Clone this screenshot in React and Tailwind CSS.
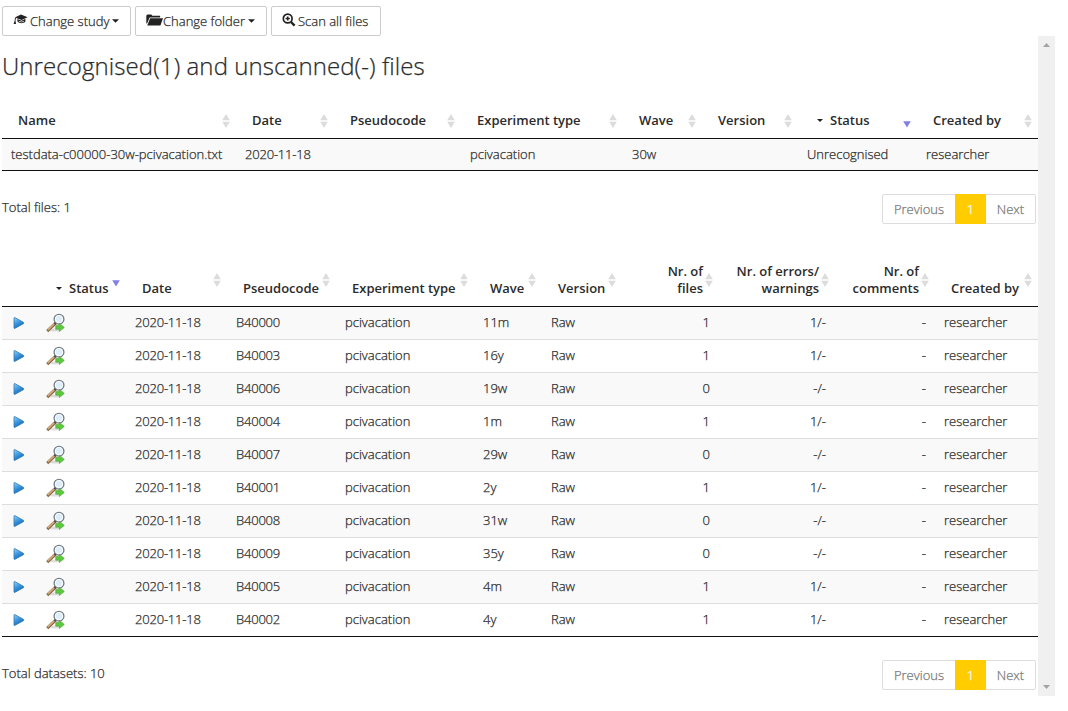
import React from "react";

const filesCols = ["w-[234px]", "w-[98px]", "w-[127px]", "w-[162px]", "w-[79px]", "w-[96px]", "w-[119px]", "w-[121px]"];
const dataCols = ["w-[36px]", "w-[88px]", "w-[101px]", "w-[109px]", "w-[138px]", "w-[68px]", "w-[80px]", "w-[97px]", "w-[116px]", "w-[100px]", "w-[103px]"];

const datasets = [
  ["B40000", "11m", "1", "1/-"],
  ["B40003", "16y", "1", "1/-"],
  ["B40006", "19w", "0", "-/-"],
  ["B40004", "1m", "1", "1/-"],
  ["B40007", "29w", "0", "-/-"],
  ["B40001", "2y", "1", "1/-"],
  ["B40008", "31w", "0", "-/-"],
  ["B40009", "35y", "0", "-/-"],
  ["B40005", "4m", "1", "1/-"],
  ["B40002", "4y", "1", "1/-"],
];

function CapIcon() {
  return (
    <svg width="15" height="12" viewBox="0 0 15 12" fill="#222" className="-translate-y-px">
      <path d="M8 0.500 14.600 3.200 8.600 6 1.800 3.400z" />
      <path d="M4.300 5 8.500 6.700 12.400 4.800V7.500C11.300 9.500 6.300 9.800 4.500 7.600z" />
      <path d="M5.800 7.300 8.500 8 11 7.300" stroke="#fff" strokeWidth="0.700" fill="none" />
      <path d="M2 3.600 2.900 4.200 2.500 6.500 3 10H0.600L1.700 6.500z" />
    </svg>
  );
}

function FolderIcon() {
  return (
    <svg width="17" height="12" viewBox="0 0 16 12" preserveAspectRatio="none" fill="#222" className="-translate-y-px">
      <path d="M0.300 9.500V1.500L1.300.5H5l1 1.300h7.300V3.500H3.400L1 9.500z" />
      <path d="M3.900 4.300H16L13.600 11.500H1.200z" />
    </svg>
  );
}

function ScanIcon() {
  return (
    <svg width="14" height="14" viewBox="0 0 14 14" fill="none" stroke="#222" className="-translate-y-px">
      <circle cx="5.700" cy="5.500" r="4.400" strokeWidth="1.700" />
      <path d="M9 9l3.600 3.600" strokeWidth="2.400" />
      <path d="M5.700 3.400v4.200M3.600 5.500h4.200" strokeWidth="1.600" />
    </svg>
  );
}

function Caret({ className = "h-[4px] w-[7px]" }) {
  return (
    <svg width="8" height="4" viewBox="0 0 8 4" className={className}>
      <path d="M0 0h8L4 4z" fill="#222" />
    </svg>
  );
}

function PlayIcon() {
  return (
    <svg width="12" height="14" viewBox="0 0 12 14" className="block">
      <defs>
        <linearGradient id="play" x1="0" y1="0" x2="0.5" y2="1">
          <stop offset="0" stopColor="#9fd3f5" />
          <stop offset="0.5" stopColor="#3f9ade" />
          <stop offset="1" stopColor="#1763b5" />
        </linearGradient>
      </defs>
      <path d="M1 2.200Q1 1.200 2 1.700L10.400 6.300Q11.300 7 10.400 7.700L2 12.300Q1 12.800 1 11.800z" fill="url(#play)" stroke="#2b78b8" strokeWidth="0.800" />
    </svg>
  );
}

function InspectIcon() {
  return (
    <svg width="20" height="20" viewBox="0 0 20 20" className="block">
      <ellipse cx="9" cy="17" rx="5" ry="1.500" fill="#000" opacity="0.120" />
      <path d="M8.800 10.900 2.300 17.100" stroke="#8a6743" strokeWidth="3" strokeLinecap="square" />
      <path d="M8.300 10.700 1.800 16.900" stroke="#d2ad80" strokeWidth="1.700" />
      <path d="M10.200 9.500 8.500 11" stroke="#444" strokeWidth="1.800" />
      <circle cx="13" cy="6.200" r="4.900" fill="#dceefb" stroke="#737b84" strokeWidth="1.300" />
      <circle cx="13" cy="6" r="3.700" fill="none" stroke="#fff" strokeWidth="0.900" />
      <path d="M9.700 12.600h3.600v-2.400l5 4.200-5 4.200v-2.400H9.700z" fill="#5cc83c" stroke="#45a52e" strokeWidth="0.600" />
    </svg>
  );
}

function SortIcon({ active, className }) {
  return (
    <svg width="8" height="14" viewBox="0 0 8 14" className={`absolute right-[6px] ${className}`}>
      {active ? (
        <path d="M0.200 7.300h7.600L4 13.500z" fill="#8080e6" />
      ) : (
        <path d="M0.200 6.300h7.600L4 0zM0.200 7.700h7.600L4 14z" fill="#dcdcdc" />
      )}
    </svg>
  );
}

function Head({ children, active, caret, right, top, pad = "pl-4" }) {
  return (
    <th className={`relative ${right ? "pr-4 text-right" : `${pad} text-left`} border-b border-[#111] pb-[9px] align-bottom font-semibold leading-[17px] [-webkit-text-stroke:0]`}>
      {caret && <Caret className="mr-[7px] inline-block h-[3px] w-[6px] -translate-y-px" />}
      {children}
      <SortIcon active={active} className={top} />
    </th>
  );
}

function Button({ children, size }) {
  return <button className={`flex h-[30px] items-center whitespace-nowrap rounded-[2px] border border-[#ccc] pl-[10px] ${size}`}>{children}</button>;
}

function Pagination() {
  return (
    <div className="mr-[2px] flex h-[30px] w-[154px] rounded-[2px] border border-[#ddd] text-[#777]">
      <span className="flex w-[72px] items-center justify-center">Previous</span>
      <span className="-my-px flex w-[31px] items-center justify-center bg-[#ffcc00] text-white">1</span>
      <span className="flex flex-1 items-center justify-center">Next</span>
    </div>
  );
}

function Cols({ widths }) {
  return (
    <colgroup>
      {widths.map((w, i) => (
        <col key={i} className={w} />
      ))}
    </colgroup>
  );
}

export default function App() {
  return (
    <div className="h-[711px] w-[1068px] overflow-hidden bg-white pl-[2px] font-['Open_Sans',sans-serif] text-[13px] font-light leading-[18px] text-[#2b2b2b] [-webkit-text-stroke:0.25px]">
      <div className="flex h-9 gap-1 pt-[6px]">
        <Button size="w-[129px]">
          <CapIcon />
          <span className="ml-[2px] mr-[3px]">Change study</span>
          <Caret />
        </Button>
        <Button size="w-[132px]">
          <FolderIcon />
          <span className="mr-[3px]">Change folder</span>
          <Caret />
        </Button>
        <Button size="w-[110px]">
          <ScanIcon />
          <span className="ml-[2px]">Scan all files</span>
        </Button>
      </div>
      <div className="flex h-[660px]">
        <main className="w-[1036px]">
          <h1 className="h-[66px] pt-[14px] text-[24px] leading-[32px] tracking-[0.09px]">Unrecognised(1) and unscanned(-) files</h1>
          <table className="w-[1036px] table-fixed border-separate border-spacing-0">
            <Cols widths={filesCols} />
            <thead>
              <tr className="h-[37px]">
                <Head top="top-[12px]">Name</Head>
                <Head top="top-[12px]">Date</Head>
                <Head top="top-[12px]">Pseudocode</Head>
                <Head top="top-[12px]">Experiment type</Head>
                <Head top="top-[12px]">Wave</Head>
                <Head top="top-[12px]">Version</Head>
                <Head top="top-[12px]" pad="pl-[19px]" active caret>Status</Head>
                <Head top="top-[12px]">Created by</Head>
              </tr>
            </thead>
            <tbody>
              <tr className="h-8 bg-[#f9f9f9] [&>td]:border-b [&>td]:border-[#111] [&>td]:pb-[2px] [&>td]:pl-[9px]">
                <td className="whitespace-nowrap">testdata-c00000-30w-pcivacation.txt</td>
                <td className="tracking-[-0.2px]">2020-11-18</td>
                <td />
                <td>pcivacation</td>
                <td>30w</td>
                <td />
                <td>Unrecognised</td>
                <td>researcher</td>
              </tr>
            </tbody>
          </table>
          <div className="flex h-[81px] justify-between pt-[23px]">
            <p className="pt-[4px]">Total files: 1</p>
            <Pagination />
          </div>
          <table className="w-[1036px] table-fixed border-separate border-spacing-0">
            <Cols widths={dataCols} />
            <thead>
              <tr className="h-[55px]">
                <th className="border-b border-[#111]" />
                <Head top="top-[21px]" pad="pl-[18px]" active caret>Status</Head>
                <Head top="top-[21px]">Date</Head>
                <Head top="top-[21px]">Pseudocode</Head>
                <Head top="top-[21px]">Experiment type</Head>
                <Head top="top-[21px]">Wave</Head>
                <Head top="top-[21px]">Version</Head>
                <Head top="top-[21px]" right>Nr. of<br />files</Head>
                <Head top="top-[21px]" right>Nr. of errors/<br />warnings</Head>
                <Head top="top-[21px]" right>Nr. of<br />comments</Head>
                <Head top="top-[21px]">Created by</Head>
              </tr>
            </thead>
            <tbody className="[&>tr:last-child>td]:border-[#111]">
              {datasets.map(([code, wave, files, errors]) => (
                <tr key={code} className="h-[33px] odd:bg-[#f9f9f9] [&>td]:border-b [&>td]:border-[#ddd] [&>td]:px-[9px] [&>td:nth-child(n+3)]:pb-[2px]">
                  <td><div className="ml-[2px]"><PlayIcon /></div></td>
                  <td><div className="-ml-[1px]"><InspectIcon /></div></td>
                  <td className="tracking-[-0.2px]">2020-11-18</td>
                  <td className="tracking-[-0.2px]">{code}</td>
                  <td>pcivacation</td>
                  <td>{wave}</td>
                  <td>Raw</td>
                  <td className="text-right">{files}</td>
                  <td className="text-right">{errors}</td>
                  <td className="text-right">-</td>
                  <td>researcher</td>
                </tr>
              ))}
            </tbody>
          </table>
          <div className="flex justify-between pt-[23px]">
            <p className="pt-[4px]">Total datasets: 10</p>
            <Pagination />
          </div>
        </main>
        <div className="flex w-[17px] flex-col items-center justify-between bg-[#f0f0f0] py-[7px]">
          <svg width="7" height="4" viewBox="0 0 7 4"><path d="M0 4 3.500 0 7 4z" fill="#a3a3a3" /></svg>
          <svg width="7" height="4" viewBox="0 0 7 4"><path d="M0 0 3.500 4 7 0z" fill="#a3a3a3" /></svg>
        </div>
      </div>
    </div>
  );
}
